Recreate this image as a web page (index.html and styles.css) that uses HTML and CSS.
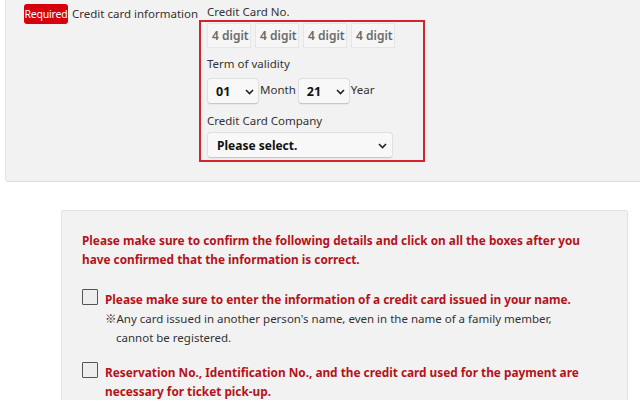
FILE: index.html
```html
<!DOCTYPE html>
<html lang="en">
<head>
<meta charset="utf-8">
<link rel="stylesheet" href="styles.css">
</head>
<body>
<section class="card-panel">
  <div class="card-row">
    <span class="badge">Required</span>
    <span class="field-label">Credit card information</span>
    <div class="field">
      <div class="sub-label first">Credit Card No.</div>
      <div class="error-box">
        <div class="digits">
          <span class="digit">4 digit</span>
          <span class="digit">4 digit</span>
          <span class="digit">4 digit</span>
          <span class="digit">4 digit</span>
        </div>
        <div class="sub-label term-label">Term of validity</div>
        <div class="term">
          <div class="select small"><span>01</span><svg class="arrow" width="9" height="6" viewBox="0 0 9 6"><polyline points="1,1 4.5,4.5 8,1" fill="none" stroke="#222" stroke-width="1.6"/></svg></div>
          <span class="unit">Month</span>
          <div class="select small"><span>21</span><svg class="arrow" width="9" height="6" viewBox="0 0 9 6"><polyline points="1,1 4.5,4.5 8,1" fill="none" stroke="#222" stroke-width="1.6"/></svg></div>
          <span class="unit">Year</span>
        </div>
        <div class="sub-label company-label">Credit Card Company</div>
        <div class="select wide"><span>Please select.</span><svg class="arrow" width="9" height="6" viewBox="0 0 9 6"><polyline points="1,1 4.5,4.5 8,1" fill="none" stroke="#222" stroke-width="1.6"/></svg></div>
      </div>
    </div>
  </div>
</section>

<section class="confirm-panel">
  <p class="confirm-head">Please make sure to confirm the following details and click on all the boxes after you have confirmed that the information is correct.</p>
  <div class="check-item">
    <span class="checkbox"></span>
    <div class="check-text">
      <div class="check-title">Please make sure to enter the information of a credit card issued in your name.</div>
      <div class="check-note"><span class="mark">※</span>Any card issued in another person's name, even in the name of a family member, cannot be registered.</div>
    </div>
  </div>
  <div class="check-item second">
    <span class="checkbox"></span>
    <div class="check-text">
      <div class="check-title">Reservation No., Identification No., and the credit card used for the payment are necessary for ticket pick-up.</div>
    </div>
  </div>
</section>
</body>
</html>
```
FILE: styles.css
```css
html, body {
  margin: 0;
  padding: 0;
  background: #ffffff;
}
body {
  font-family: "Noto Sans", "Noto Sans CJK JP", sans-serif;
  font-size: 11.5px;
  color: #333333;
  overflow: hidden;
  width: 640px;
  height: 400px;
}

/* top panel */
.card-panel {
  background: #f2f2f2;
  margin: 0 -12px 0 5px;
  padding: 4px 0 19px 18px;
  border-left: 1px solid #e2e2e2;
  border-bottom: 1px solid #dcdcdc;
  border-bottom-left-radius: 4px;
}
.card-row {
  display: flex;
  align-items: flex-start;
}
.badge {
  display: block;
  width: 44px;
  height: 20px;
  line-height: 20px;
  text-align: center;
  background: #d7000f;
  color: #ffffff;
  font-size: 10.5px;
  letter-spacing: -0.2px;
  border-radius: 3px;
}
.field-label {
  display: block;
  width: 127px;
  margin-left: 4px;
  line-height: 19px;
  white-space: nowrap;
}
.field {
  display: flex;
  flex-direction: column;
}
.sub-label {
  line-height: 16px;
  padding-left: 8px;
  white-space: nowrap;
}
.error-box {
  width: 212px;
  border: 2px solid #d3232b;
  padding: 1px 4px 2px 6px;
}
.error-box .sub-label {
  padding-left: 0;
}
.digits {
  display: flex;
  gap: 4px;
}
.digit {
  display: block;
  box-sizing: border-box;
  width: 44px;
  height: 25px;
  line-height: 23px;
  padding-left: 4px;
  background: #f6f6f6;
  border: 1px solid #e6e6e6;
  color: #6a6a6a;
  font-size: 12px;
  font-weight: 600;
  white-space: nowrap;
}
.term-label {
  margin-top: 8px;
}
.term {
  display: flex;
  align-items: center;
  margin-top: 6px;
}
.select {
  box-sizing: border-box;
  display: flex;
  align-items: center;
  justify-content: space-between;
  height: 26px;
  background: #f8f8f8;
  border: 1px solid #e0e0e0;
  border-bottom-color: #c9c9c9;
  border-radius: 4px;
  box-shadow: 0 1px 0 rgba(0, 0, 0, 0.04);
  color: #111111;
  font-size: 12.5px;
  font-weight: 700;
  padding: 0 4px 0 8px;
}
.select span {
  padding-top: 1px;
}
.select.small {
  width: 52px;
}
.select.wide {
  width: 186px;
  padding-left: 9px;
  padding-right: 5px;
  font-size: 12px;
}
.arrow {
  display: block;
  margin-top: 1px;
}
.unit {
  padding-bottom: 3px;
  margin: 0 2px 0 1px;
}
.company-label {
  margin-top: 9px;
}
.error-box .select.wide {
  margin-top: 3px;
}

/* confirm panel */
.confirm-panel {
  margin: 28px 12px 0 61px;
  background: #f2f2f2;
  border: 1px solid #e2e2e2;
  border-radius: 2px;
  padding: 20px 37px 20px 20px;
  height: 300px;
}
.confirm-head {
  margin: 0;
  color: #b5121b;
  font-weight: 700;
  font-size: 11.8px;
  line-height: 19px;
}
.check-item {
  display: flex;
  align-items: flex-start;
  margin-top: 21px;
}
.check-item.second {
  margin-top: 16px;
}
.checkbox {
  display: block;
  flex: none;
  box-sizing: border-box;
  width: 16px;
  height: 16px;
  margin-top: -1px;
  margin-right: 7px;
  background: #ededed;
  border: 1px solid #555555;
  border-radius: 1px;
}
.check-text {
  flex: 1;
  line-height: 19px;
  padding-right: 8px;
}
.check-title {
  color: #b5121b;
  font-weight: 700;
  font-size: 11.8px;
}
.check-note {
  padding-left: 11px;
  text-indent: -11px;
}
.mark {
  font-family: "Noto Sans CJK JP", sans-serif;
}
```
